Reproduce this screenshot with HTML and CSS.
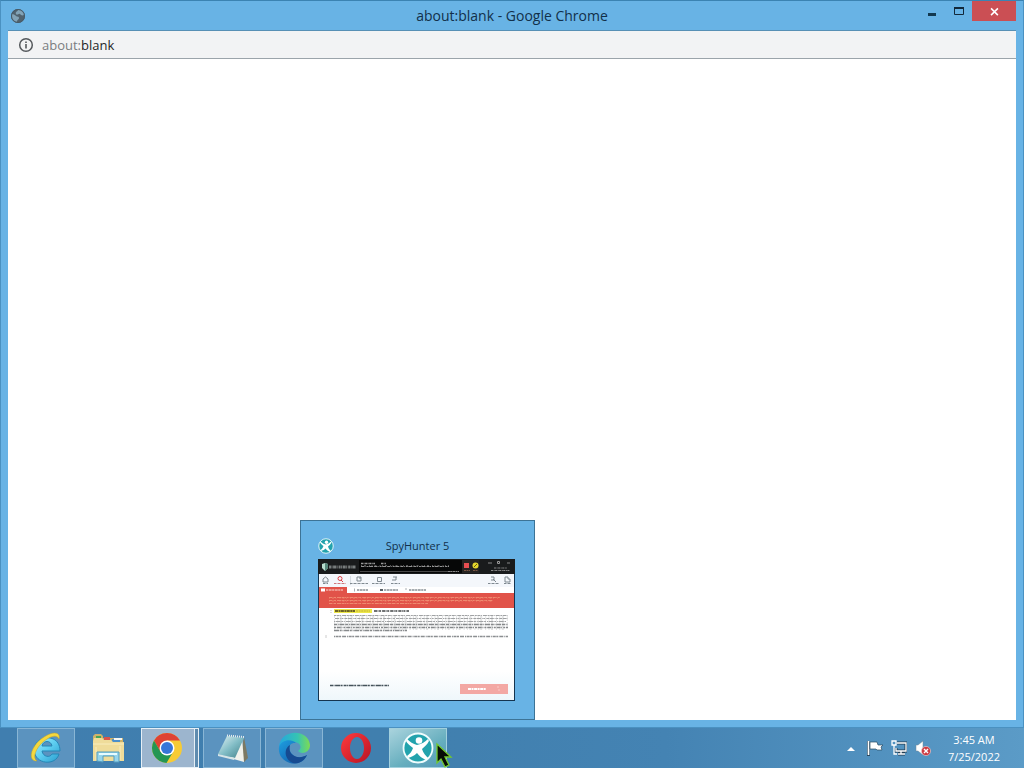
FILE: index.html
```html
<!DOCTYPE html>
<html lang="en">
<head>
  <meta charset="UTF-8">
  <title>about:blank - Google Chrome</title>
  <link rel="stylesheet" href="styles.css">
</head>
<body>

<main class="window">
  <header class="titlebar">
    <svg class="globe" viewBox="0 0 16 16" aria-hidden="true">
      <circle cx="8" cy="8" r="7" fill="#50626e"/>
      <path d="M2 6c2 0 3 1 4 2s3 0 3 2-2 1-2 4C3 13 1 10 2 6zM8 2c-1 2-3 2-2 4s3-1 4 0 2 2 4 1c0-3-2-5-6-5z" fill="#82a3b7"/>
      <circle cx="8" cy="8" r="6.500" fill="none" stroke="#465a68"/>
    </svg>
    <h1 class="title">about:blank - Google Chrome</h1>
    <div class="controls">
      <button class="control" aria-label="Minimize">
        <svg viewBox="0 0 27 20"><path d="M10 12h8v3h-8z" fill="#12384f"/></svg>
      </button>
      <button class="control" aria-label="Maximize">
        <svg viewBox="0 0 27 20"><path d="M9.500 7.500h9v6h-9z" fill="none" stroke="#12283a"/><path d="M9 6h10v2H9z" fill="#12283a"/></svg>
      </button>
      <button class="control close" aria-label="Close">
        <svg viewBox="0 0 45 20"><path d="M19.500 7.500l7 7M26.500 7.500l-7 7" stroke="#fff" stroke-width="1.600"/></svg>
      </button>
    </div>
  </header>

  <div class="addressbar">
    <button class="info" aria-label="View site information">
      <svg viewBox="0 0 16 16"><circle cx="8" cy="8" r="6.300" fill="none" stroke="#55595c" stroke-width="1.500"/><path d="M7.200 7h1.600v4.500H7.200zM7.200 4.400h1.600V6H7.200z" fill="#55595c"/></svg>
    </button>
    <span class="url"><span class="scheme">about:</span>blank</span>
  </div>

  <div class="page"></div>
</main>

<aside class="preview">
  <div class="preview-head">
    <svg class="preview-icon" viewBox="0 0 32 32" aria-hidden="true"><use href="#spyhunter"/></svg>
    <span class="preview-title">SpyHunter 5</span>
  </div>
  <svg class="thumbnail" viewBox="0 0 197 142" role="img" aria-label="SpyHunter 5 window">
    <defs>
      <linearGradient id="foot" x2="0" y2="1"><stop offset="0" stop-color="#fff"/><stop offset="1" stop-color="#eff7fb"/></linearGradient>
    </defs>
    <rect width="197" height="142" fill="#14344f"/>
    <rect x="1" y="15" width="195" height="126" fill="#fff"/>
    <rect x="1" y="112" width="195" height="29" fill="url(#foot)"/>
    <rect width="197" height="15" fill="#191b1c"/>
    <rect x="41" y="1" width="103" height="13" fill="#060707"/>
    <rect x="144" y="1" width="17" height="13" fill="#262321"/>
    <path d="M42 12.500h91" stroke="#484848"/>
    <path d="M4 5l3-1 3 1v4l-3 3-3-3z" fill="#b8ddce"/><path d="M7 4l3 1v4l-3 3z" fill="#57877b"/>
    <g fill="none">
      <path d="M11 8h27" stroke="#777c7c" stroke-width="3" stroke-dasharray="2 .5 1 .6 3 .5 1 1"/>
      <path d="M43 4.500h14M63 4.500h5" stroke="#999" stroke-width="1.500" stroke-dasharray="2 .5 1 .6"/>
      <path d="M43 7.500h88" stroke="#929292" stroke-dasharray="3 .5 1 1 2 .6 4 1"/>
      <path d="M43 6.500h88" stroke="#555" stroke-dasharray="1 2 2 3 1 1.500"/>
      <path d="M130 12.500h11" stroke="#888" stroke-dasharray="2 .5"/>
      <path d="M146 11.500h6M155 11.500h5" stroke="#754" stroke-dasharray="2 .5"/>
      <path d="M170 4h4M189 4h3" stroke="#888"/>
      <path d="M176 9h13M173 11.500h19" stroke="#858585" stroke-dasharray="2 .6 1 .5"/>
    </g>
    <rect x="146" y="4" width="5" height="5" fill="#e64e51"/>
    <circle cx="157.500" cy="6.500" r="3" fill="#e7d72c"/><path d="M156 8l3-3" stroke="#665c12"/>
    <path d="M179.500 2.500h2v2h-2z" fill="none" stroke="#999"/>

    <rect x="1" y="15" width="195" height="13" fill="#f4f7fb"/>
    <path d="M32.500 17v9" stroke="#d6dce2"/>
    <g fill="none" stroke="#7f8990">
      <path d="M5 20l2.500-2 2.500 2v3H5zM39 18h4v4h-4zM41 19h2M59.500 18.500h4v4h-4z"/>
      <path d="M75 18h4M74 21h4v-3M173 18h3v3h-3M175 20l3 3M187 18h3v2h2v3h-5z"/>
      <circle cx="22" cy="19.500" r="2" stroke="#dd4148"/><path d="M23 21l2 2" stroke="#dd4148"/>
      <path d="M5 24.500h5M32 24.500h18M54 24.500h13M73 24.500h9M170 24.500h11M186 24.500h7" stroke-dasharray="2 .5 1 .5"/>
      <path d="M16 24.500h12" stroke="#d1777b" stroke-dasharray="2 .5 1 .5"/>
    </g>

    <rect x="1" y="28" width="28" height="7" fill="#e15349"/>
    <rect x="1" y="34" width="195" height="15" fill="#e15349"/>
    <g fill="none">
      <path d="M3 31h4" stroke="#fff" stroke-width="3"/>
      <path d="M8 31h17" stroke="#f3b0a7" stroke-width="1.500" stroke-dasharray="2 .6 3 .5"/>
      <path d="M39 31h11M66 31h14M91 31h17" stroke="#899197" stroke-width="1.500" stroke-dasharray="2 .6 3 .5"/>
      <path d="M36.500 29.500v3M87 30h2" stroke="#aab0b4"/><path d="M62 31h3" stroke="#565e64" stroke-width="2"/>
      <path d="M11 38.500h171M11 41.500h164M11 44.500h99" stroke="#ee8a70" stroke-dasharray="3 .5 1 .5 2 1 4 .6"/>
      <path d="M11 39.500h171M11 42.500h164" stroke="#e86a59" stroke-dasharray="1 2 2 1.500 1 3"/>
    </g>

    <rect x="16" y="50" width="38" height="4" fill="#eee949"/>
    <g fill="none">
      <path d="M13 51v3" stroke="#bbb" stroke-dasharray="1"/>
      <path d="M17 52h20" stroke="#6d6325" stroke-width="2" stroke-dasharray="3 .5 2 .4"/>
      <path d="M38 52h14" stroke="#c0ad32" stroke-dasharray="2 .6"/>
      <path d="M56 52h35" stroke="#707273" stroke-width="2" stroke-dasharray="3 .5 1 .6 2 1"/>
      <g stroke="#a0a2a4">
        <path d="M16 56.500h174" stroke-dasharray="2 .6 3 .5 1 1 4 .7"/>
        <path d="M17 59.500h173" stroke-dasharray="4 .8 1 .6 2 1 3 .5"/>
        <path d="M16 62.500h172" stroke-dasharray="1 .6 5 .7 2 .9"/>
      </g>
      <g stroke="#85888a" stroke-width="1.500">
        <path d="M16 65.500h174" stroke-dasharray="3 .7 1 .7 5 .8"/>
        <path d="M16 68.500h174" stroke-dasharray="2 .8 4 .6 1 1"/>
        <path d="M16 71.500h73" stroke-dasharray="5 .7 2 .8 1 .6"/>
      </g>
      <path d="M16 58h174M16 61h174M16 64h174M16 67h174M16 70h172" stroke="#c4c6c7" stroke-dasharray="1 2.300 1 1.500 2 3"/>
      <path d="M8 76v3" stroke="#ccc"/>
      <path d="M16 77.500h174" stroke="#8b8e91" stroke-width="1.500" stroke-dasharray="1 .6 3 .5 2 1 4 1"/>
      <path d="M12 126.500h59" stroke="#44525a" stroke-width="1.500" stroke-dasharray="3 .5 1 .6 5 .5 2 1"/>
    </g>
    <rect x="142" y="125" width="48" height="10" fill="#f3a8a4"/>
    <path d="M150 130h18" stroke="#fff" stroke-width="2" stroke-dasharray="3 .5 2 .6"/>
    <path d="M179 128h2M180 131h2" stroke="#f9cbc7"/>
  </svg>
</aside>

<footer class="taskbar">
  <nav class="apps">
    <button class="app open" aria-label="Internet Explorer">
      <svg viewBox="0 0 32 32">
        <defs><linearGradient id="ie" x2="1" y2="1"><stop offset="0" stop-color="#a8eefb"/><stop offset=".5" stop-color="#5ccdf0"/><stop offset="1" stop-color="#289bcc"/></linearGradient></defs>
        <path d="M30 19H12c1 6 8 7 10 3h7C26 34 5 33 4 18 4 3 30 0 30 19zM12 14h10c-1-6-9-6-10 0z" fill="url(#ie)" stroke="#2587b7" fill-rule="evenodd"/>
        <path d="M7 29C-4 29 2 12 14 5c9-6 17-5 15 2-2-5-9-3-16 3S2 26 7 29z" fill="#f5d83e" stroke="#bca030" stroke-width=".5"/>
      </svg>
    </button>
    <button class="app" aria-label="File Explorer">
      <svg viewBox="0 0 32 32">
        <path d="M1 4l2-2h6l2 2v2h20v23H1z" fill="#cdb26a"/>
        <path d="M4 4h5v2H4z" fill="#46a458"/><path d="M12 5h6v3h-6z" fill="#d7544c"/><path d="M20 7h8v3h-8z" fill="#4b8fcb"/><path d="M22 6h8v2h-8z" fill="#f4f7f5"/>
        <path d="M2 6h8l2 2h7l2 2h11v19H1V9z" fill="#efdc9a"/><path d="M1 12h31M4 15v13M28 14v14" stroke="#f9edbd"/>
        <path d="M5 29V20h22v10h-5v-6H11v6z" fill="#97d5eb" stroke="#559dbe"/><path d="M7 22h18" stroke="#e7fcff" stroke-width="2"/>
      </svg>
    </button>
    <button class="app active" aria-label="Google Chrome">
      <svg viewBox="0 0 32 32">
        <circle cx="16" cy="16" r="15" fill="#f7cb35"/>
        <path d="M3 8.500A15 15 0 0 1 29 8.500H16v7.500l-6.500 4z" fill="#df4234"/>
        <path d="M3 8.500l6.500 11.300L16 23l6-3-6.500 11A15 15 0 0 1 3 8.500z" fill="#249653"/>
        <circle cx="16" cy="16" r="7.500" fill="#fff"/><circle cx="16" cy="16" r="6" fill="#3776d8"/>
      </svg>
    </button>
    <button class="app open" aria-label="Notepad">
      <svg viewBox="0 0 32 32">
        <defs><linearGradient id="note" x2="1" y2="1"><stop offset="0" stop-color="#e3f2f4"/><stop offset=".5" stop-color="#82bdc6"/><stop offset="1" stop-color="#3f7f88"/></linearGradient></defs>
        <path d="M28 5l4 21-4 4-4-3z" fill="#7c7963"/><path d="M26 5l2 25-14-4z" fill="#f1f2ec"/>
        <path d="M11 4l17 2-9 20-17-4z" fill="url(#note)"/><path d="M2 22l17 4-1 2-16-4z" fill="#d6e5e7"/>
        <path d="M11 3.500l17 1.500" stroke="#e9eeee" stroke-width="2" stroke-dasharray="1 1"/>
      </svg>
    </button>
    <button class="app open" aria-label="Microsoft Edge">
      <svg viewBox="0 0 32 32">
        <defs>
          <linearGradient id="edge"><stop offset="0" stop-color="#25a6df"/><stop offset=".6" stop-color="#36c4b2"/><stop offset="1" stop-color="#7ddb53"/></linearGradient>
          <linearGradient id="wave" x2="1" y2="1"><stop offset="0" stop-color="#1e9ee0"/><stop offset="1" stop-color="#1054a3"/></linearGradient>
        </defs>
        <path d="M1 15C2-3 30-4 32 13c0 8-9 10-12 6 5-3 2-9-4-9C9 9 3 12 1 15z" fill="url(#edge)"/>
        <path d="M1 15c2-7 12-9 17-4-8-1-8 7-4 11 4 5 10 4 15 1-3 7-10 10-17 8C4 29 0 22 1 15z" fill="url(#wave)"/>
        <path d="M12 13c-7 4-5 15 3 18 6 1 11-2 14-8-8 5-20 1-17-10z" fill="#164b91"/>
      </svg>
    </button>
    <button class="app" aria-label="Opera">
      <svg viewBox="0 0 32 32">
        <defs><linearGradient id="opera" x2="1" y2="1"><stop offset="0" stop-color="#ff3b3d"/><stop offset="1" stop-color="#b71324"/></linearGradient></defs>
        <path d="M16 1a15 15 0 1 0 0 30 15 15 0 1 0 0-30zM17 5c4 0 7 5 7 11s-3 11-7 11-7-5-7-11 3-11 7-11z" fill="url(#opera)" fill-rule="evenodd"/>
      </svg>
    </button>
    <button class="app hover" aria-label="SpyHunter 5">
      <svg viewBox="0 0 32 32">
        <g id="spyhunter">
          <circle cx="16" cy="16" r="14.500" fill="#23a3ad" stroke="#effcfd" stroke-width="1.800"/>
          <circle cx="17" cy="8.500" r="3.300" fill="#fff"/>
          <path d="M5 7c3 3 6 5 10 6 5-1 8-3 11-6l1 2c-2 4-5 6-7 8 1 4 4 7 6 9l-2 2c-4-2-7-4-9-7-3 3-6 4-9 5l-1-2c3-2 5-5 6-8-3-2-6-5-7-7z" fill="#fff"/>
        </g>
      </svg>
    </button>
  </nav>

  <div class="tray">
    <button class="tray-icon" aria-label="Show hidden icons"><svg viewBox="0 0 16 16"><path d="M4 11l4-4 4 4z" fill="#fff"/></svg></button>
    <button class="tray-icon" aria-label="Action Center"><svg viewBox="0 0 16 16"><path d="M1.500 1v15" stroke="#294a62" stroke-width="3"/><path d="M1.500 1v14" stroke="#fff" stroke-width="1.700"/><path d="M3 2h7l1 3h5l-2 2 1 3h-5L9 9H3z" fill="#fff" stroke="#294a62" stroke-width=".7"/></svg></button>
    <button class="tray-icon" aria-label="Network"><svg viewBox="0 0 16 16"><path d="M6 3h9v8H5V8M10 11v3M7 14h7" fill="none" stroke="#233f54" stroke-width="3"/><path d="M6 3h9v8H5V8M10 11v3M7 14h7M1 1v4h4V1zM3 5v9h3" fill="none" stroke="#fff" stroke-width="1.300"/></svg></button>
    <button class="tray-icon" aria-label="Volume muted"><svg viewBox="0 0 16 16"><path d="M1 5h2l5-4v14l-5-4H1z" fill="#fff" stroke="#6f8696" stroke-width=".5"/><circle cx="11" cy="11" r="4.600" fill="#cf3c43" stroke="#efd4d3" stroke-width=".6"/><path d="M9 9l4 4M13 9l-4 4" stroke="#fff" stroke-width="1.400"/></svg></button>
    <button class="clock"><time>3:45 AM</time><time>7/25/2022</time></button>
  </div>
</footer>

<svg class="cursor" viewBox="0 0 18 26" aria-hidden="true"><path d="M2 2v19l4-4 4 8 4-2-4-8h6z" fill="#080c06" stroke="#72c92e" stroke-width="1.300"/></svg>

</body>
</html>
```

FILE: styles.css
```css
* {
  box-sizing: border-box;
}

body {
  margin: 0;
  height: 100vh;
  display: flex;
  flex-direction: column;
  overflow: hidden;
  position: relative;
  font-family: "Open Sans", "Noto Sans", sans-serif;
  background: #3f7cad;
}

button {
  padding: 0;
  border: none;
  background: none;
  font: inherit;
  color: inherit;
}

svg {
  display: block;
}

.window {
  flex: 1;
  min-height: 0;
  display: flex;
  flex-direction: column;
  padding: 0 7px 7px;
  background: #68b3e5;
  border: 1px solid #4a91c1;
  border-top-color: #3b83b2;
}

.titlebar {
  display: grid;
  grid-template-columns: 1fr auto 1fr;
  align-items: center;
  height: 30px;
  border-bottom: 1px solid #5790b5;
}

.globe {
  width: 16px;
  height: 16px;
  margin-left: 2px;
}

.title {
  margin: 0;
  font-size: 14px;
  font-weight: 400;
  line-height: 20px;
  color: #12304a;
}

.controls {
  display: flex;
  justify-content: flex-end;
  align-self: start;
}

.control {
  width: 27px;
  height: 20px;
}

.close {
  width: 44px;
  background: #cb4f54;
}

.addressbar {
  display: flex;
  align-items: center;
  gap: 8px;
  height: 28px;
  padding: 0 10px;
  background: #f2f3f4;
  border-bottom: 1px solid #9ba4aa;
}

.info {
  width: 16px;
  height: 16px;
}

.url {
  font-size: 13px;
  line-height: 20px;
  color: #242628;
}

.scheme {
  color: #7a7d80;
}

.page {
  flex: 1;
  background: #fff;
}

.preview {
  position: absolute;
  left: 300px;
  bottom: 48px;
  width: 235px;
  height: 200px;
  padding: 16px 17px;
  background: #68b3e5;
  border: 1px solid #3c7396;
}

.preview-head {
  display: grid;
  grid-template-columns: 16px 1fr 16px;
  align-items: center;
  height: 18px;
  margin-bottom: 4px;
}

.preview-icon {
  width: 16px;
  height: 16px;
}

.preview-title {
  font-size: 11px;
  line-height: 18px;
  text-align: center;
  color: #12304a;
}

.thumbnail {
  width: 197px;
  height: 142px;
}

.taskbar {
  display: flex;
  justify-content: space-between;
  height: 40px;
  padding: 0 24px 0 17px;
  background: linear-gradient(90deg, #407eaf 0%, #407fae 38%, #4483b3 65%, #5b9bc7 100%);
}

.apps {
  display: flex;
  gap: 4px;
}

.app {
  display: flex;
  align-items: center;
  justify-content: center;
  width: 58px;
  height: 40px;
  border: 1px solid transparent;
}

.app svg {
  width: 32px;
  height: 32px;
}

.open {
  background: #5b93bf;
  border-color: #89b6d5;
}

.active {
  padding-right: 6px;
  background: linear-gradient(90deg, #9cb5ce 52px, #e6eff6 52px, #e6eff6 53px, #5e8baf 53px);
  border-color: #e6eff6;
}

.hover {
  background: linear-gradient(150deg, #a9d3dd, #66aebe 60%, #5698b9);
  border-color: #a2d0dd;
}

.tray {
  display: flex;
  align-items: center;
  gap: 8px;
  color: #fff;
}

.tray-icon {
  width: 16px;
  height: 16px;
}

.clock {
  display: flex;
  flex-direction: column;
  align-items: center;
  margin-left: 9px;
  font-size: 11px;
  line-height: 17px;
}

.cursor {
  position: absolute;
  left: 435px;
  bottom: 0;
  width: 18px;
  height: 26px;
}
```
